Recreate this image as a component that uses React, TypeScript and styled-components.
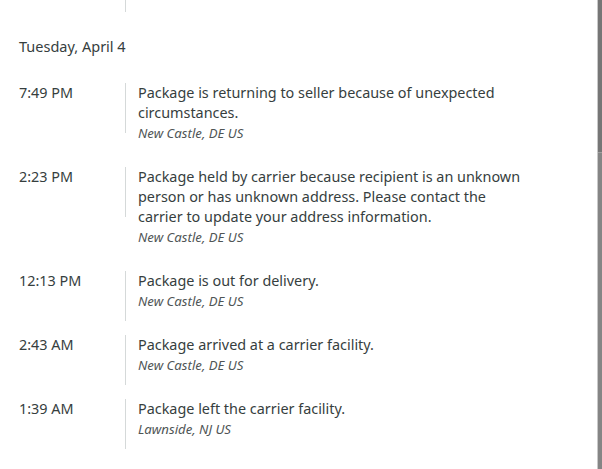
import styled, { createGlobalStyle } from "styled-components";

type TrackingEvent = {
  time: string;
  lines: string[];
  location: string;
};

const events: TrackingEvent[] = [
  {
    time: "7:49 PM",
    lines: [
      "Package is returning to seller because of unexpected",
      "circumstances.",
    ],
    location: "New Castle, DE US",
  },
  {
    time: "2:23 PM",
    lines: [
      "Package held by carrier because recipient is an unknown",
      "person or has unknown address. Please contact the",
      "carrier to update your address information.",
    ],
    location: "New Castle, DE US",
  },
  {
    time: "12:13 PM",
    lines: ["Package is out for delivery."],
    location: "New Castle, DE US",
  },
  {
    time: "2:43 AM",
    lines: ["Package arrived at a carrier facility."],
    location: "New Castle, DE US",
  },
  {
    time: "1:39 AM",
    lines: ["Package left the carrier facility."],
    location: "Lawnside, NJ US",
  },
];

const EventRow = ({ event }: { event: TrackingEvent }) => (
  <Row>
    <Time>{event.time}</Time>
    <Divider />
    <Body>
      <Description>
        {event.lines.map((line) => (
          <span key={line}>{line}</span>
        ))}
      </Description>
      <Location>{event.location}</Location>
    </Body>
  </Row>
);

export default function App() {
  return (
    <>
      <GlobalStyle />
      <Window>
        <Viewport>
          <Scrolled>
            <EventRow
              event={{
                time: "",
                lines: ["Package is in transit."],
                location: "Kearny, NJ US",
              }}
            />
            <DayHeading>Tuesday, April 4</DayHeading>
            {events.map((e) => (
              <EventRow key={e.time} event={e} />
            ))}
          </Scrolled>
        </Viewport>
        <Scrollbar>
          <Thumb />
        </Scrollbar>
      </Window>
    </>
  );
}

const GlobalStyle = createGlobalStyle`
  html, body {
    margin: 0;
    padding: 0;
    background: #ffffff;
  }
  body {
    font-family: "Noto Sans", "Liberation Sans", sans-serif;
    color: #363e3e;
  }
`;

const Window = styled.div`
  display: flex;
  width: 602px;
  height: 469px;
  overflow: hidden;
`;

const Viewport = styled.div`
  flex: 1;
  height: 100%;
  overflow: hidden;
`;

const Scrolled = styled.div`
  margin-top: -38px;
  padding-left: 19px;
`;

const DayHeading = styled.h3`
  margin: 34px 0 27px;
  font-size: 14.5px;
  font-weight: 400;
  line-height: 20px;
  color: #363e3e;
`;

const Row = styled.div`
  display: flex;
  align-items: flex-start;
  margin-bottom: 24px;
`;

const Time = styled.div`
  width: 106px;
  flex-shrink: 0;
  font-size: 14.4px;
  line-height: 20px;
`;

const Divider = styled.div`
  width: 1px;
  height: 50px;
  margin-bottom: -10px;
  flex-shrink: 0;
  background: #d5d9d9;
`;

const Body = styled.div`
  padding-left: 12px;
`;

const Description = styled.div`
  display: flex;
  flex-direction: column;
  font-size: 14.4px;
  line-height: 20px;
`;

const Location = styled.div`
  font-size: 13.2px;
  font-style: italic;
  line-height: 20px;
  color: #4f5555;
`;

const Scrollbar = styled.div`
  width: 4px;
  height: 100%;
  border-left: 1px solid #c9c9c9;
  background: #858585;
`;

const Thumb = styled.div`
  height: 152px;
  background: #767676;
  border-bottom: 1px solid #a0a0a0;
`;
